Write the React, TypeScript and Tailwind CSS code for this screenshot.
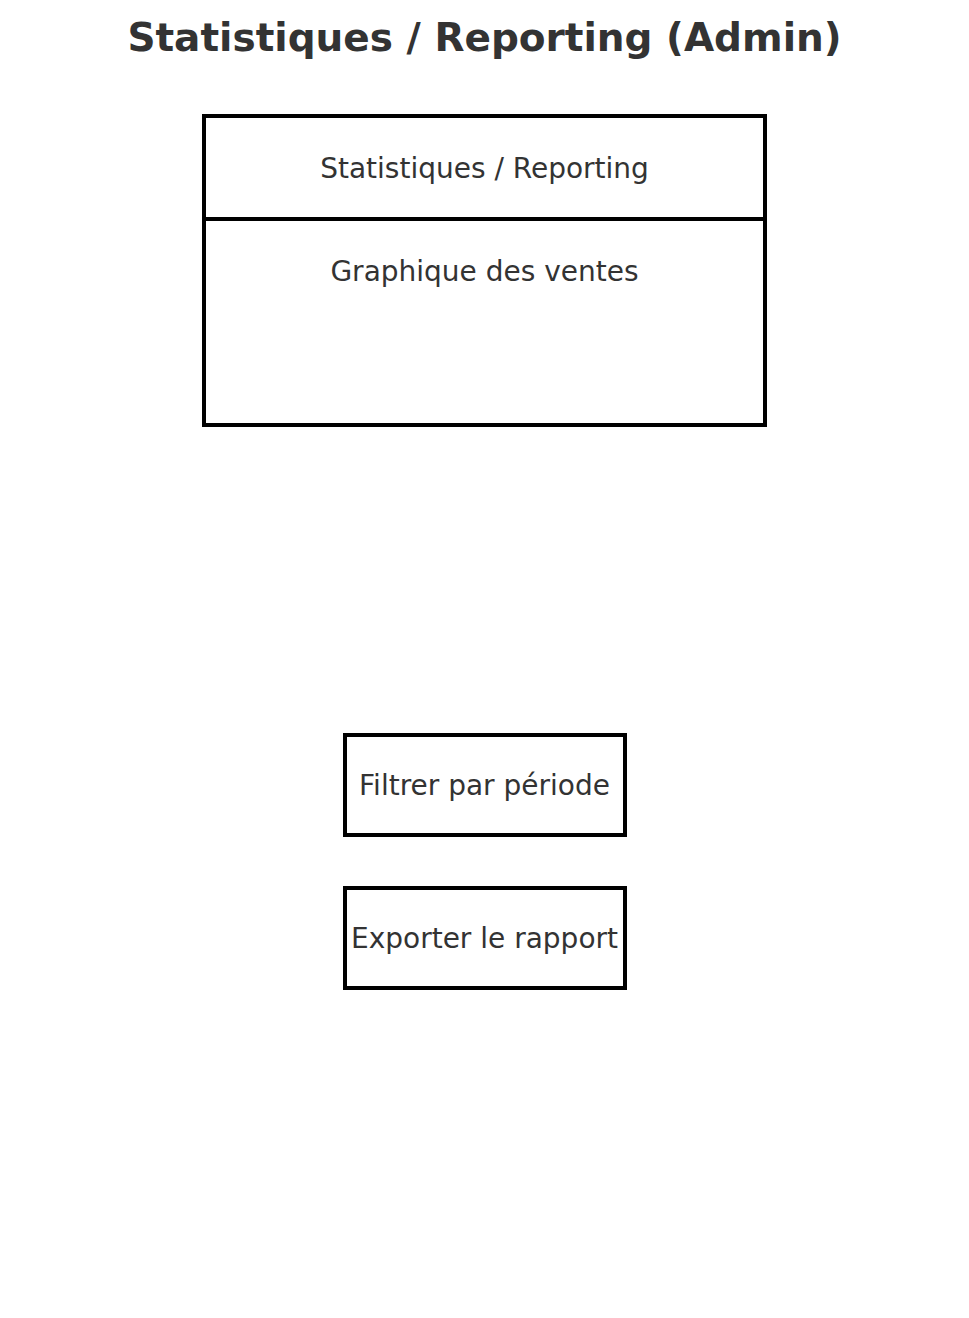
import React from 'react';

const font = "font-['DejaVu_Sans',sans-serif]";

const App: React.FC = () => {
  return (
    <div className={`w-[969px] h-[1318px] bg-white flex flex-col items-center text-[#333333] ${font}`}>
      <h1 className="mt-[15px] text-[39px] leading-[45px] font-bold">Statistiques / Reporting (Admin)</h1>

      <div className="mt-[54px] w-[565px] h-[313px] border-[4px] border-black flex flex-col">
        <div className="h-[99px] pt-[1px] flex items-center justify-center text-[28px] leading-[33px]">
          Statistiques / Reporting
        </div>
        <div className="flex-1 border-t-[4px] border-black pt-[34px] text-center text-[28px] leading-[33px]">
          Graphique des ventes
        </div>
      </div>

      <button className="mt-[306px] w-[284px] h-[104px] border-[4px] border-black flex items-center justify-center text-[28px] leading-[33px]">
        Filtrer par période
      </button>
      <button className="mt-[49px] w-[284px] h-[104px] border-[4px] border-black flex items-center justify-center text-[28px] leading-[33px] whitespace-nowrap">
        Exporter le rapport
      </button>
    </div>
  );
};

export default App;
